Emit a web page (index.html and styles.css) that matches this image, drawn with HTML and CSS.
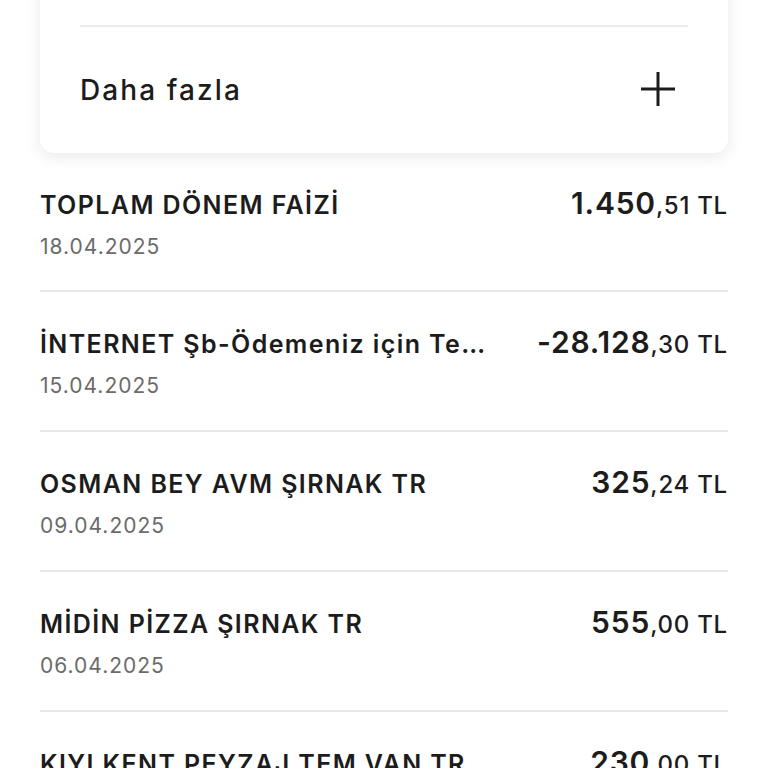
FILE: index.html
```html
<!DOCTYPE html>
<html lang="tr">
<head>
  <meta charset="UTF-8">
  <meta name="viewport" content="width=device-width, initial-scale=1.0">
  <title>Hesap Hareketleri</title>
  <link rel="stylesheet" href="styles.css">
</head>
<body>
  <div class="page">
    <div class="card">
      <div class="card-divider"></div>
      <div class="more-row">
        <span class="more-label">Daha fazla</span>
        <svg class="plus-icon" width="36" height="36" viewBox="0 0 36 36">
          <path d="M18 1V35M1 18H35" stroke="#1c1c1c" stroke-width="3" fill="none"/>
        </svg>
      </div>
    </div>

    <ul class="tx-list">
      <li class="tx-row">
        <div class="tx-info">
          <div class="tx-title">TOPLAM DÖNEM FAİZİ</div>
          <div class="tx-date">18.04.2025</div>
        </div>
        <div class="tx-amount"><span class="amt-int">1.450</span><span class="amt-dec">,51</span><span class="amt-cur">TL</span></div>
      </li>
      <li class="tx-row">
        <div class="tx-info">
          <div class="tx-title">İNTERNET Şb-Ödemeniz için Teşekkür Ederiz</div>
          <div class="tx-date">15.04.2025</div>
        </div>
        <div class="tx-amount"><span class="amt-int">-28.128</span><span class="amt-dec">,30</span><span class="amt-cur">TL</span></div>
      </li>
      <li class="tx-row">
        <div class="tx-info">
          <div class="tx-title">OSMAN BEY AVM ŞIRNAK TR</div>
          <div class="tx-date">09.04.2025</div>
        </div>
        <div class="tx-amount"><span class="amt-int">325</span><span class="amt-dec">,24</span><span class="amt-cur">TL</span></div>
      </li>
      <li class="tx-row">
        <div class="tx-info">
          <div class="tx-title">MİDİN PİZZA ŞIRNAK TR</div>
          <div class="tx-date">06.04.2025</div>
        </div>
        <div class="tx-amount"><span class="amt-int">555</span><span class="amt-dec">,00</span><span class="amt-cur">TL</span></div>
      </li>
      <li class="tx-row">
        <div class="tx-info">
          <div class="tx-title">KIYI KENT PEYZAJ TEM VAN TR</div>
          <div class="tx-date">04.04.2025</div>
        </div>
        <div class="tx-amount"><span class="amt-int">230</span><span class="amt-dec">,00</span><span class="amt-cur">TL</span></div>
      </li>
    </ul>
  </div>
</body>
</html>
```

FILE: styles.css
```css
body {
  font-family: Inter, "Noto Sans", sans-serif;
  background-color: #fff;
  color: #1c1c1c;
  margin: 0;
  padding: 0;
  overflow: hidden;
}
.page {
  padding: 0 40px;
}
.card {
  background-color: #fff;
  margin-top: -30px;
  padding: 55px 40px 0;
  border-radius: 0 0 14px 14px;
  box-shadow: 0 4px 16px rgba(0, 0, 0, 0.09);
}
.card-divider {
  height: 2px;
  background-color: #ececec;
}
.more-row {
  display: flex;
  justify-content: space-between;
  align-items: center;
  height: 125px;
  padding-bottom: 1px;
}
.more-label {
  font-size: 28px;
  font-weight: 500;
  letter-spacing: 2.1px;
}
.plus-icon {
  margin-right: 12px;
  margin-top: -2px;
}
.tx-list {
  list-style: none;
  margin: 0;
  padding: 0;
}
.tx-row {
  display: flex;
  justify-content: space-between;
  align-items: flex-start;
  gap: 44px;
  height: 139px;
  border-bottom: 2px solid #e8e8e8;
  box-sizing: border-box;
  padding-top: 36px;
}
.tx-row + .tx-row {
  height: 140px;
}
.tx-info {
  min-width: 0;
  flex: 1;
}
.tx-title {
  font-size: 25px;
  font-weight: 600;
  letter-spacing: 1.4px;
  white-space: nowrap;
  overflow: hidden;
  text-overflow: ellipsis;
  line-height: 32px;
}
.tx-date {
  margin-top: 12px;
  font-size: 21px;
  color: #6b6b6b;
  letter-spacing: 1px;
  line-height: 28px;
}
.tx-amount {
  white-space: nowrap;
  line-height: 32px;
  margin-top: -2px;
  letter-spacing: 0.8px;
}
.amt-int {
  font-size: 30px;
  font-weight: 600;
}
.amt-dec {
  font-size: 24px;
  font-weight: 500;
}
.amt-cur {
  font-size: 24px;
  font-weight: 500;
  margin-left: 7px;
}
```
